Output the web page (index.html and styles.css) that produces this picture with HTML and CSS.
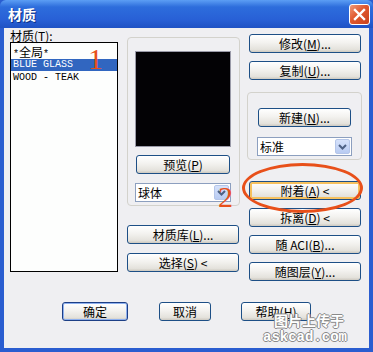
FILE: index.html
```html
<!DOCTYPE html>
<html>

<head>
    <meta charset="utf-8">
    <title>材质</title>
    <link rel="stylesheet" href="styles.css">
</head>

<body>
    <div id="dialog">
        <div id="title-bar">
            <span id="title">材质</span>
            <span id="close-button">
                <svg width="13" height="13" viewBox="0 0 13 13">
                    <path d="M2 2 L11 11 M11 2 L2 11" stroke="#fff" stroke-width="2.4" stroke-linecap="square"/>
                </svg>
            </span>
        </div>

        <div id="client">
            <div id="columns">
                <!-- material list -->
                <div class="col-left">
                    <div class="label">材质(<u>T</u>):</div>
                    <ul id="material-list">
                        <li>*<span class="cjk">全局</span>*</li>
                        <li class="selected">BLUE GLASS</li>
                        <li>WOOD - TEAK</li>
                    </ul>
                </div>

                <!-- preview -->
                <div class="col-mid">
                    <div class="group preview-group">
                        <div id="preview"></div>
                        <button class="btn preview-btn">预览(<u>P</u>)</button>
                        <div class="combo preview-combo">
                            <span class="combo-text">球体</span>
                            <span class="combo-arrow"><svg width="9" height="6" viewBox="0 0 9 6"><path d="M1 1 L4.5 4.5 L8 1" fill="none" stroke="#4d6185" stroke-width="2"/></svg></span>
                        </div>
                    </div>
                    <button class="btn mid-btn lib-btn">材质库(<u>L</u>)...</button>
                    <button class="btn mid-btn">选择(<u>S</u>) &lt;</button>
                </div>

                <!-- actions -->
                <div class="col-right">
                    <button class="btn right-btn first">修改(<u>M</u>)...</button>
                    <button class="btn right-btn">复制(<u>U</u>)...</button>
                    <div class="group new-group">
                        <button class="btn new-btn">新建(<u>N</u>)...</button>
                        <div class="combo new-combo">
                            <span class="combo-text">标准</span>
                            <span class="combo-arrow"><svg width="9" height="6" viewBox="0 0 9 6"><path d="M1 1 L4.5 4.5 L8 1" fill="none" stroke="#4d6185" stroke-width="2"/></svg></span>
                        </div>
                    </div>
                    <button class="btn right-btn attach-btn focused">附着(<u>A</u>) &lt;</button>
                    <button class="btn right-btn">拆离(<u>D</u>) &lt;</button>
                    <button class="btn right-btn">随 ACI(<u>B</u>)...</button>
                    <button class="btn right-btn">随图层(<u>Y</u>)...</button>
                </div>
            </div>

            <div id="bottom-row">
                <button class="btn ok-btn">确定</button>
                <button class="btn cancel-btn">取消</button>
                <button class="btn help-btn">帮助(<u>H</u>)</button>
            </div>

            <!-- annotations drawn over the dialog -->
            <span class="mark mark-one">1</span>
            <span class="mark mark-two">2</span>
            <span id="ellipse"></span>
        </div>

        <div id="watermark">
            <div class="wm-cn">图片上传于</div>
            <div class="wm-en">askcad.com</div>
        </div>
    </div>
</body>
</html>
```

FILE: styles.css
```css
body {
    margin: 0;
    width: 373px;
    height: 352px;
    overflow: hidden;
    font-family: "Noto Sans CJK SC", "Liberation Sans", sans-serif;
    font-size: 12px;
}

#dialog {
    position: relative;
    width: 373px;
    height: 352px;
    box-sizing: border-box;
    background: #2a5dd0;
    padding: 0 4px 4px 4px;
}

#title-bar {
    height: 28px;
    margin: 0 -4px;
    padding: 0 8px;
    display: flex;
    align-items: center;
    justify-content: space-between;
    background: linear-gradient(#5c9ef4, #2d6ddc 25%, #2860d6 70%, #1f52c4);
    border-radius: 6px 6px 0 0;
}

#title {
    color: #fff;
    font-weight: bold;
    font-size: 14px;
    text-shadow: 1px 1px 0 #0b2f86;
}

#close-button {
    width: 21px;
    height: 21px;
    margin-right: -5px;
    box-sizing: border-box;
    display: flex;
    align-items: center;
    justify-content: center;
    background: linear-gradient(135deg, #f09a7a, #e0582e 45%, #c8401c);
    border: 1px solid #fff;
    border-radius: 3px;
}

#client {
    position: relative;
    height: 320px;
    box-sizing: border-box;
    background: #efeff2;
    padding-left: 6px;
}

#columns {
    display: flex;
}

/* left column */
.col-left {
    width: 108px;
    margin-top: 2px;
}

.label {
    height: 12px;
    line-height: 12px;
    margin-bottom: 0;
}

#material-list {
    list-style: none;
    margin: 0;
    padding: 3px 0 0 0;
    height: 230px;
    box-sizing: border-box;
    border: 1px solid #000;
    background: #fdfefd;
    font-family: "Liberation Mono", "Noto Sans CJK SC", monospace;
    font-size: 10px;
}

#material-list li {
    height: 12px;
    line-height: 12px;
    padding-left: 2px;
    margin-bottom: 1px;
}

#material-list .cjk {
    font-family: "Noto Sans CJK SC", sans-serif;
    font-size: 12px;
}

#material-list .selected {
    background: #3166c0;
    color: #fff;
}

/* groups */
.group {
    box-sizing: border-box;
    border: 1px solid #d3d2cc;
    border-radius: 4px;
}

/* middle column */
.col-mid {
    width: 113px;
    margin-left: 9px;
}

.preview-group {
    margin-top: 9px;
    height: 169px;
    padding: 13px 0 0 7px;
}

#preview {
    width: 96px;
    height: 96px;
    background: #030205;
    border: 1px solid #9a9aa8;
    box-sizing: border-box;
}

.preview-btn {
    width: 94px;
    margin: 8px 0 0 1px;
}

.preview-combo {
    width: 96px;
    margin-top: 9px;
}

.mid-btn {
    width: 112px;
    margin-top: 9px;
}

.lib-btn {
    margin-top: 19px;
}

/* right column */
.col-right {
    width: 112px;
    margin-left: 9px;
}

.right-btn {
    width: 112px;
    margin-top: 8px;
}

.right-btn.first {
    margin-top: 6px;
}

.new-group {
    width: 115px;
    height: 68px;
    margin: 12px 0 0 -2px;
    padding: 15px 0 0 10px;
}

.new-btn {
    width: 93px;
}

.new-combo {
    width: 95px;
    margin: 10px 0 0 -1px;
}

.attach-btn {
    margin-top: 21px;
}

/* buttons */
.btn {
    display: block;
    height: 19px;
    box-sizing: border-box;
    padding: 0;
    font-family: "Noto Sans CJK SC", "Liberation Sans", sans-serif;
    font-size: 12px;
    line-height: 17px;
    color: #000;
    text-align: center;
    border: 1px solid #1d4f86;
    border-radius: 3px;
    background: linear-gradient(#ffffff, #f3f2ef 45%, #e4e2dc 85%, #cdc9c0);
}

.btn u {
    text-decoration: underline;
}

.focused {
    box-shadow: inset 0 0 0 2px #f6c15e;
}

/* combo boxes */
.combo {
    height: 19px;
    box-sizing: border-box;
    display: flex;
    align-items: center;
    justify-content: space-between;
    background: #fff;
    border: 1px solid #8c9fbf;
}

.combo-text {
    padding-left: 2px;
    font-size: 12px;
}

.combo-arrow {
    width: 15px;
    height: 15px;
    margin-right: 1px;
    display: flex;
    align-items: center;
    justify-content: center;
    background: linear-gradient(#d6e2fb, #b8cbf2);
    border: 1px solid #b5c6e9;
    border-radius: 2px;
    box-sizing: border-box;
}

/* bottom buttons */
#bottom-row {
    display: flex;
    margin: 21px 0 0 52px;
}

.ok-btn {
    width: 66px;
    border-color: #1d3f86;
    box-shadow: inset 0 0 0 1px #8eb0ee;
}

.cancel-btn {
    width: 52px;
    margin-left: 31px;
}

.help-btn {
    width: 70px;
    margin-left: 30px;
}

/* annotations */
.mark {
    position: absolute;
    color: #e8501a;
    font-family: "Liberation Serif", serif;
    font-size: 30px;
    line-height: 30px;
}

.mark-one {
    left: 84px;
    top: 16px;
}

.mark-two {
    left: 214px;
    top: 154px;
}

#ellipse {
    position: absolute;
    left: 238px;
    top: 135px;
    width: 121px;
    height: 50px;
    box-sizing: border-box;
    border: 3px solid #e8501a;
    border-radius: 50%;
}

#watermark {
    position: absolute;
    right: 26px;
    bottom: 6px;
    text-align: center;
    color: #fff;
    font-weight: bold;
    text-shadow: -1px 0 #8a8a8a, 1px 0 #8a8a8a, 0 -1px #8a8a8a, 0 1px #8a8a8a;
}

.wm-cn {
    font-size: 14px;
    line-height: 16px;
    margin-left: 8px;
}

.wm-en {
    font-family: "Liberation Mono", monospace;
    font-size: 14px;
    line-height: 18px;
}
```
